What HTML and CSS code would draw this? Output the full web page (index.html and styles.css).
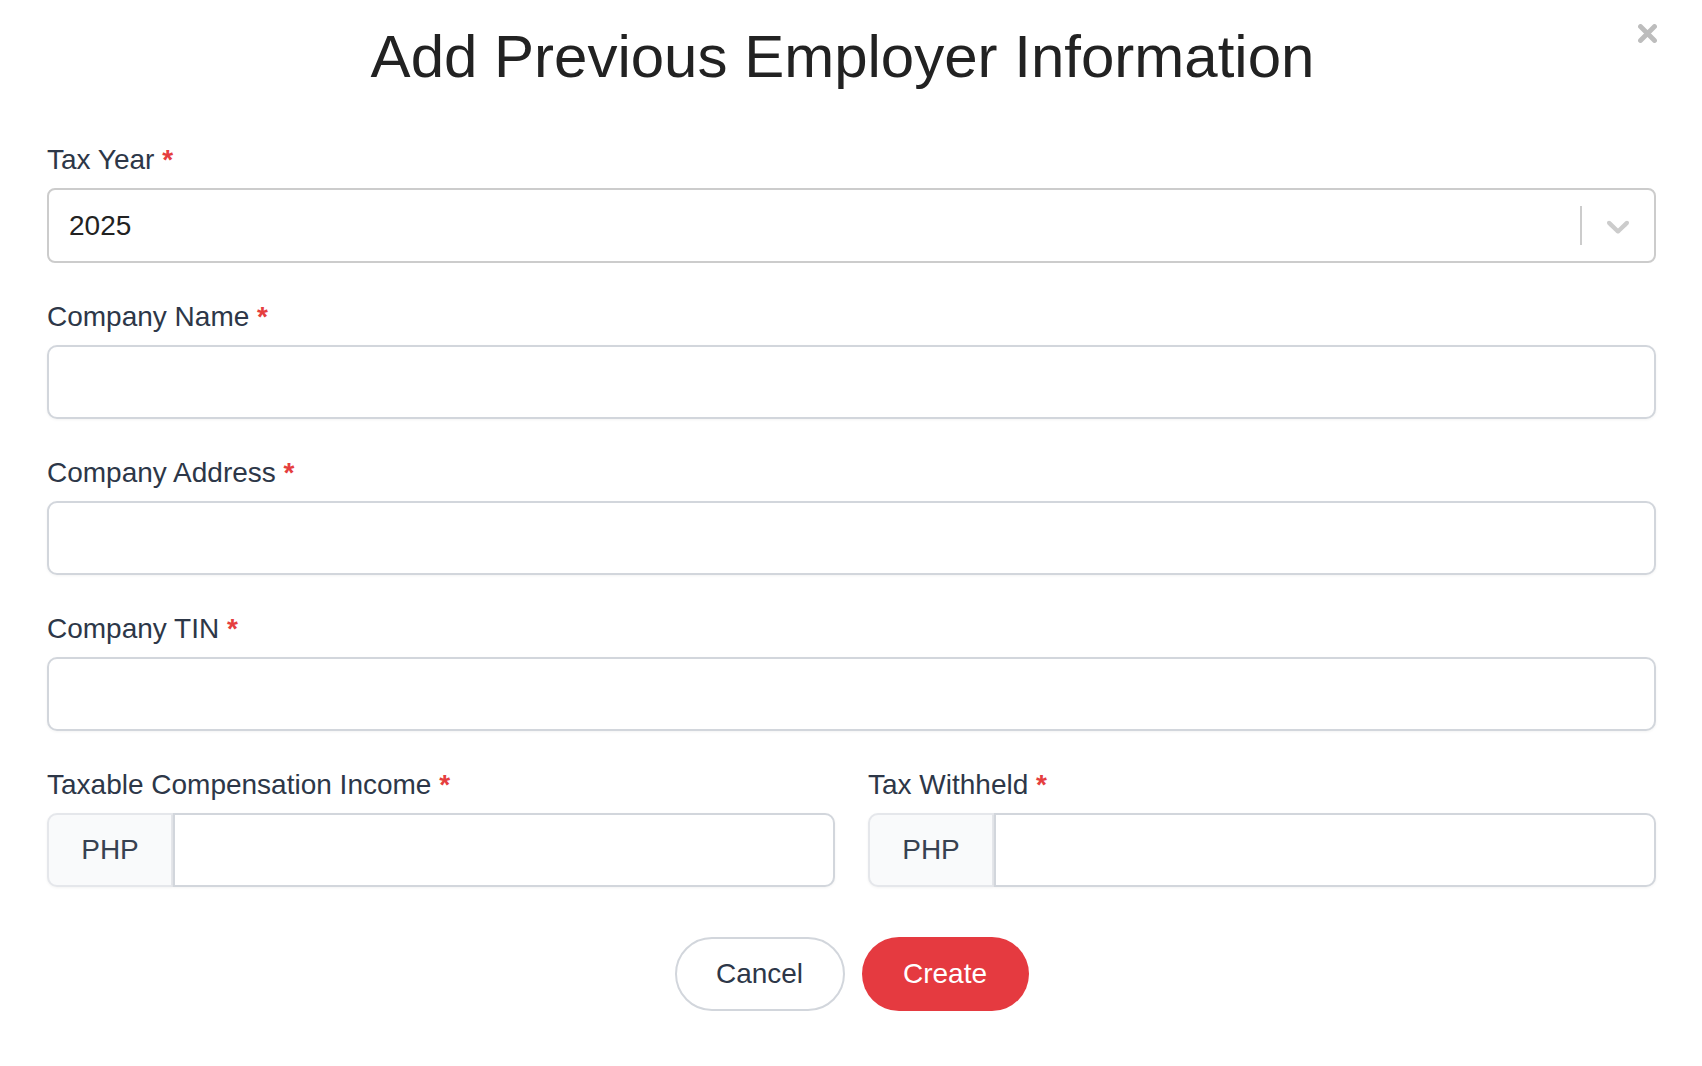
FILE: index.html
```html
<!DOCTYPE html>
<html lang="en">
<head>
<meta charset="utf-8">
<title>Add Previous Employer Information</title>
<link rel="stylesheet" href="styles.css">
</head>
<body>
<div class="modal">
  <header class="modal-header">
    <h1 class="modal-title">Add Previous Employer Information</h1>
    <button class="close-btn" aria-label="Close">
      <svg width="19" height="19" viewBox="0 0 19 19"><path d="M2.5 2.5 L16.5 16.5 M16.5 2.5 L2.5 16.5" stroke="#bdbdbd" stroke-width="4.8" stroke-linecap="round" fill="none"/></svg>
    </button>
  </header>

  <form class="form">
    <div class="field">
      <label class="label">Tax Year <span class="req">*</span></label>
      <div class="select">
        <span class="select-value">2025</span>
        <span class="select-sep"></span>
        <span class="select-arrow">
          <svg width="38" height="38" viewBox="0 0 20 20"><path fill="#cccccc" d="M4.516 7.548c0.436-0.446 1.043-0.481 1.576 0l3.908 3.747 3.908-3.747c0.533-0.481 1.141-0.446 1.574 0 0.436 0.445 0.408 1.197 0 1.615-0.406 0.418-4.695 4.502-4.695 4.502-0.217 0.223-0.502 0.335-0.787 0.335s-0.57-0.112-0.789-0.335c0 0-4.287-4.084-4.695-4.502s-0.436-1.170 0-1.615z"/></svg>
        </span>
      </div>
    </div>

    <div class="field">
      <label class="label">Company Name <span class="req">*</span></label>
      <input class="input" type="text">
    </div>

    <div class="field">
      <label class="label">Company Address <span class="req">*</span></label>
      <input class="input" type="text">
    </div>

    <div class="field">
      <label class="label">Company TIN <span class="req">*</span></label>
      <input class="input" type="text">
    </div>

    <div class="row">
      <div class="field">
        <label class="label">Taxable Compensation Income <span class="req">*</span></label>
        <div class="group">
          <span class="addon">PHP</span>
          <input class="input group-input" type="text">
        </div>
      </div>
      <div class="field">
        <label class="label">Tax Withheld <span class="req">*</span></label>
        <div class="group">
          <span class="addon">PHP</span>
          <input class="input group-input" type="text">
        </div>
      </div>
    </div>

    <div class="actions">
      <button type="button" class="btn btn-cancel">Cancel</button>
      <button type="button" class="btn btn-create">Create</button>
    </div>
  </form>
</div>
</body>
</html>
```

FILE: styles.css
```css
* { box-sizing: border-box; }

html, body {
  margin: 0;
  padding: 0;
  background: #ffffff;
  font-family: "Liberation Sans", Arial, Helvetica, sans-serif;
}

.modal {
  position: relative;
  padding: 0 46px 0 47px;
}

.modal-header {
  padding-top: 21px;
  padding-bottom: 46px;
  padding-right: 18px;
  text-align: center;
}

.modal-title {
  margin: 0;
  font-size: 60px;
  line-height: 72px;
  font-weight: 400;
  color: #222222;
}

.close-btn {
  position: absolute;
  top: 24px;
  right: 45px;
  width: 19px;
  height: 19px;
  padding: 0;
  border: 0;
  background: transparent;
  display: block;
}
.close-btn svg { display: block; }

.form { margin: 0; }

.field { margin-bottom: 33px; }

.label {
  display: block;
  font-size: 28px;
  line-height: 42px;
  color: #2d3748;
  margin-bottom: 7px;
}

.req {
  color: #e53e3e;
  font-weight: 700;
}

.input {
  display: block;
  width: 100%;
  height: 74px;
  border: 2px solid #d2d6dc;
  border-radius: 10px;
  background: #fff;
  box-shadow: 0 1px 3px rgba(0, 0, 0, 0.05);
  font-family: inherit;
  font-size: 28px;
  padding: 0 20px;
  outline: none;
}

.select {
  display: flex;
  align-items: center;
  height: 75px;
  border: 2px solid #cccccc;
  border-radius: 8px;
  background: #fff;
  padding-left: 20px;
}

.select-value {
  flex: 1;
  font-size: 28px;
  color: #222;
}

.select-sep {
  width: 2px;
  height: 39px;
  background: #cccccc;
}

.select-arrow {
  display: flex;
  align-items: center;
  justify-content: center;
  width: 72px;
  height: 100%;
}
.select-arrow svg { display: block; }

.row {
  display: grid;
  grid-template-columns: 1fr 1fr;
  column-gap: 33px;
}

.row .field { margin-bottom: 50px; }

.group {
  display: flex;
  height: 74px;
}

.addon {
  display: flex;
  align-items: center;
  justify-content: center;
  width: 126px;
  flex: none;
  background: #f9fafb;
  border: 2px solid #e5e7eb;
  border-radius: 10px 0 0 10px;
  font-size: 28px;
  color: #374151;
  box-shadow: 0 1px 3px rgba(0, 0, 0, 0.05);
}

.group-input {
  flex: 1;
  width: auto;
  min-width: 0;
  border-radius: 0 10px 10px 0;
}

.actions {
  display: flex;
  justify-content: center;
  gap: 17px;
}

.btn {
  height: 74px;
  border-radius: 37px;
  font-family: inherit;
  font-size: 28px;
  padding: 0;
  cursor: pointer;
}

.btn-cancel {
  width: 170px;
  background: #fff;
  border: 2px solid #d2d6dc;
  color: #2d3748;
}

.btn-create {
  width: 167px;
  background: #e53a40;
  border: 0;
  color: #fff;
}
```
